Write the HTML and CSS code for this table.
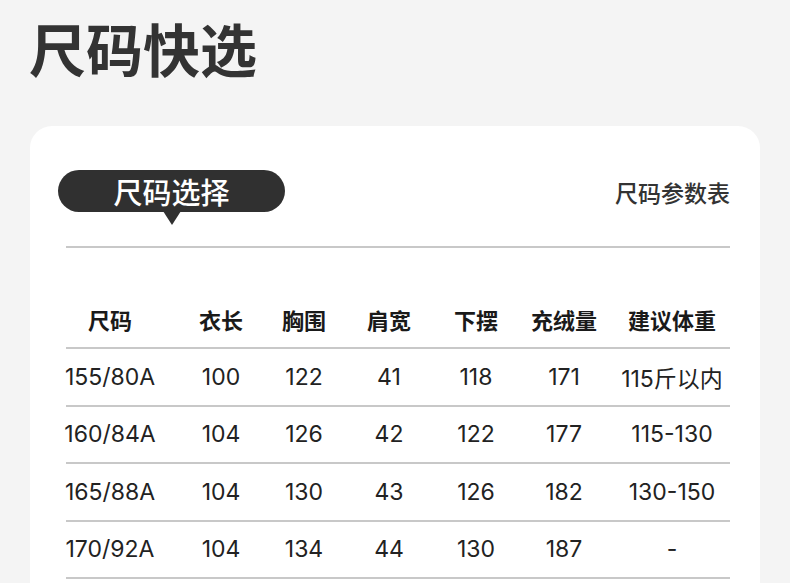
FILE: index.html
```html
<!DOCTYPE html>
<html lang="zh-CN">
<head>
<meta charset="utf-8">
<title>尺码快选</title>
<link rel="stylesheet" href="styles.css">
</head>
<body>
<h1 class="title">尺码快选</h1>
<section class="card">
  <div class="card-head">
    <div class="pill">尺码选择</div>
    <div class="link">尺码参数表</div>
  </div>
  <div class="table">
    <div class="row head">
      <div class="cell">尺码</div><div class="cell">衣长</div><div class="cell">胸围</div><div class="cell">肩宽</div><div class="cell">下摆</div><div class="cell">充绒量</div><div class="cell">建议体重</div>
    </div>
    <div class="row">
      <div class="cell">155/80A</div><div class="cell">100</div><div class="cell">122</div><div class="cell">41</div><div class="cell">118</div><div class="cell">171</div><div class="cell">115斤以内</div>
    </div>
    <div class="row">
      <div class="cell">160/84A</div><div class="cell">104</div><div class="cell">126</div><div class="cell">42</div><div class="cell">122</div><div class="cell">177</div><div class="cell">115-130</div>
    </div>
    <div class="row">
      <div class="cell">165/88A</div><div class="cell">104</div><div class="cell">130</div><div class="cell">43</div><div class="cell">126</div><div class="cell">182</div><div class="cell">130-150</div>
    </div>
    <div class="row">
      <div class="cell">170/92A</div><div class="cell">104</div><div class="cell">134</div><div class="cell">44</div><div class="cell">130</div><div class="cell">187</div><div class="cell">-</div>
    </div>
  </div>
</section>
</body>
</html>
```
FILE: styles.css
```css
html, body {
  margin: 0;
  padding: 0;
}
body {
  background: #f4f4f4;
  font-family: "Noto Sans CJK SC", "Noto Sans", sans-serif;
  color: #222;
  overflow: hidden;
}
.title {
  margin: 0;
  padding: 9px 0 0 29px;
  height: 126px;
  box-sizing: border-box;
  font-size: 57px;
  line-height: 76px;
  font-weight: 700;
  color: #333;
}
.card {
  margin-left: 30px;
  width: 730px;
  background: #fff;
  border-radius: 22px;
  padding: 44px 30px 40px 36px;
  box-sizing: border-box;
  min-height: 500px;
}
.card-head {
  display: flex;
  justify-content: space-between;
  align-items: center;
  height: 42px;
  margin-left: -8px;
  margin-bottom: 34px;
}
.pill {
  position: relative;
  width: 227px;
  height: 42px;
  border-radius: 21px;
  background: #303030;
  color: #fff;
  font-size: 29px;
  font-weight: 500;
  line-height: 42px;
  text-align: center;
}
.pill::after {
  content: "";
  position: absolute;
  left: 105px;
  top: 41px;
  border-left: 9px solid transparent;
  border-right: 9px solid transparent;
  border-top: 14px solid #303030;
}
.link {
  font-size: 23px;
  font-weight: 500;
  color: #333;
  margin-top: 2px;
}
.table {
  border-top: 2px solid #c8c8c8;
}
.row {
  display: grid;
  grid-template-columns: 99px 97px 84px 86px 88px 98px 112px;
  height: 55.5px;
  border-bottom: 2px solid #c8c8c8;
  align-items: center;
  font-family: Inter, "Noto Sans CJK SC", sans-serif;
  font-size: 23px;
  font-weight: 400;
}
.row.head {
  padding-top: 42px;
  box-sizing: border-box;
  height: 101px;
  font-family: "Noto Sans CJK SC", sans-serif;
  font-size: 22px;
  font-weight: 700;
  color: #1a1a1a;
}
.cell {
  display: flex;
  justify-content: center;
  white-space: nowrap;
}
.cell:nth-child(7n+1) { padding-right: 11px; }
.cell:nth-child(7n+2) { padding-left: 15px; }
.cell:nth-child(7n+6) { padding-right: 10px; }
.cell:nth-child(7n+7) { padding-right: 4px; }
```
